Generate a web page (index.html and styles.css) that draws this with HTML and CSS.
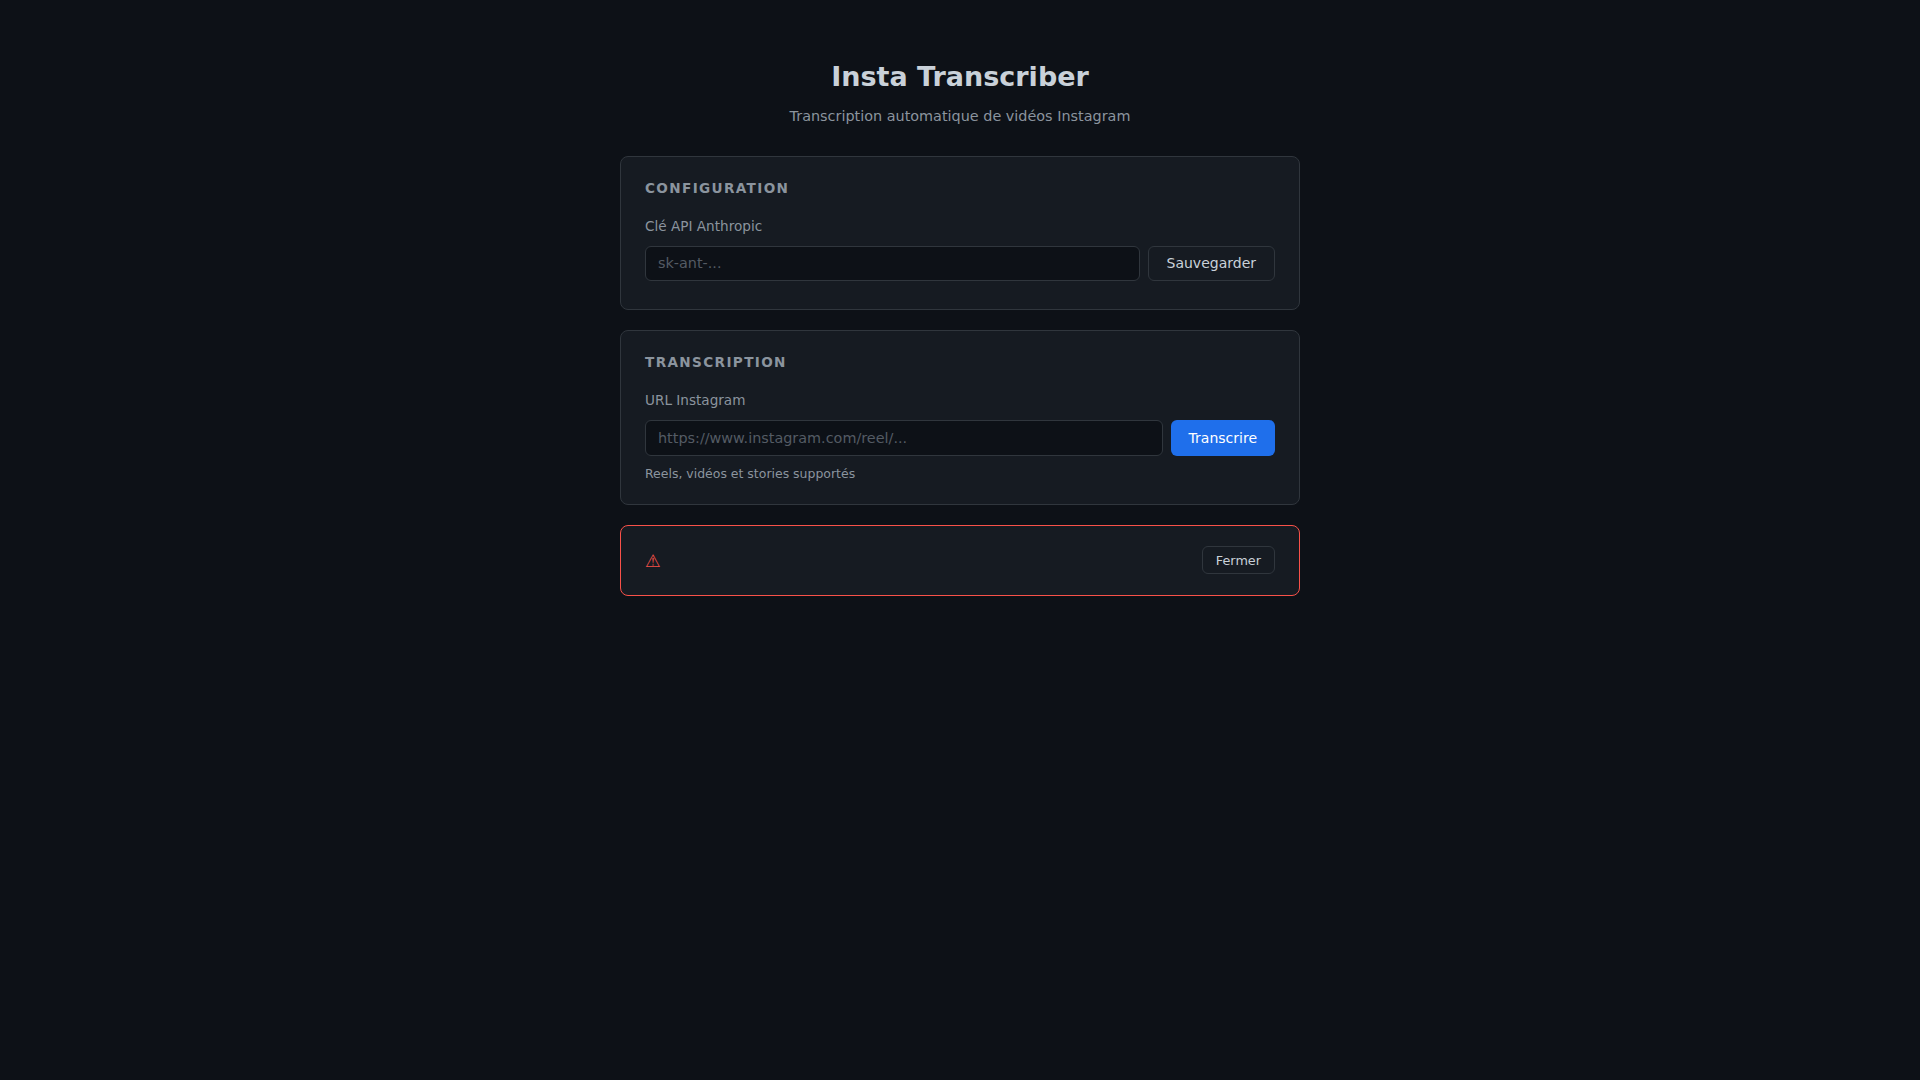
FILE: index.html
```html
<!DOCTYPE html>
<html lang="fr">
<head>
    <meta charset="UTF-8">
    <meta name="viewport" content="width=device-width, initial-scale=1.0">
    <title>Insta Transcriber</title>
    <link rel="stylesheet" href="styles.css">
</head>
<body>
    <div class="container">
        <header class="header">
            <h1>Insta Transcriber</h1>
            <p>Transcription automatique de vidéos Instagram</p>
        </header>

        <!-- Configuration -->
        <section class="card">
            <h2>Configuration</h2>
            <label for="apiKey">Clé API Anthropic</label>
            <div class="row">
                <input id="apiKey" type="password" placeholder="sk-ant-...">
                <button class="btn">Sauvegarder</button>
            </div>
        </section>

        <!-- Transcription -->
        <section class="card">
            <h2>Transcription</h2>
            <label for="url">URL Instagram</label>
            <div class="row">
                <input id="url" type="text" placeholder="https://www.instagram.com/reel/...">
                <button class="btn btn-primary">Transcrire</button>
            </div>
            <p class="hint">Reels, vidéos et stories supportés</p>
        </section>

        <!-- Erreur -->
        <section class="card error">
            <span class="error-icon">⚠</span>
            <button class="btn btn-small">Fermer</button>
        </section>
    </div>
</body>
</html>
```

FILE: styles.css
```css
* { box-sizing: border-box; margin: 0; padding: 0; }
html, body { height: 100%; }
body {
    background: #0d1117;
    color: #c9d1d9;
    font-family: "DejaVu Sans", sans-serif;
    line-height: 1.6;
}
.container {
    width: 680px;
    margin: 0 auto;
    padding-top: 56px;
}
.header { text-align: center; margin-bottom: 28px; }
.header h1 { font-size: 27px; line-height: 42px; font-weight: 700; margin-bottom: 7px; color: #c9d1d9; }
.header p { font-size: 14.4px; color: #8b949e; }
.card {
    background: #161b22;
    border: 1px solid #30363d;
    border-radius: 8px;
    padding: 21px 24px 20.5px;
    margin-bottom: 20px;
}
.card h2 {
    font-size: 13.6px;
    font-weight: 700;
    letter-spacing: 0.1em;
    text-transform: uppercase;
    color: #8b949e;
    margin-bottom: 16px;
}
label { display: block; font-size: 13.6px; color: #8b949e; margin-bottom: 8px; }
.row { display: flex; gap: 8px; margin-bottom: 8px; }
input {
    flex: 1;
    min-width: 0;
    height: 36px;
    padding: 0 12px;
    background: #0d1117;
    border: 1px solid #30363d;
    border-radius: 6px;
    color: #c9d1d9;
    font-family: inherit;
    font-size: 14.4px;
    outline: none;
}
input[type="password"] { height: 35px; }
input::placeholder { color: #545b64; }
.btn {
    padding: 0 18px;
    background: #161b22;
    border: 1px solid #30363d;
    border-radius: 6px;
    color: #c9d1d9;
    font-family: inherit;
    font-size: 14px;
    cursor: pointer;
}
.btn-primary { background: #1f6feb; border: none; color: #fff; }
.btn-small { height: 28px; padding: 0 13px; font-size: 12.8px; }
.hint { font-size: 12.48px; color: #8b949e; }
.error {
    display: flex;
    justify-content: space-between;
    align-items: center;
    padding: 20px 24px 21px;
    border-color: #f85149;
}
.error-icon { font-size: 17.6px; line-height: 25px; margin-top: 3px; color: #f85149; }
```
